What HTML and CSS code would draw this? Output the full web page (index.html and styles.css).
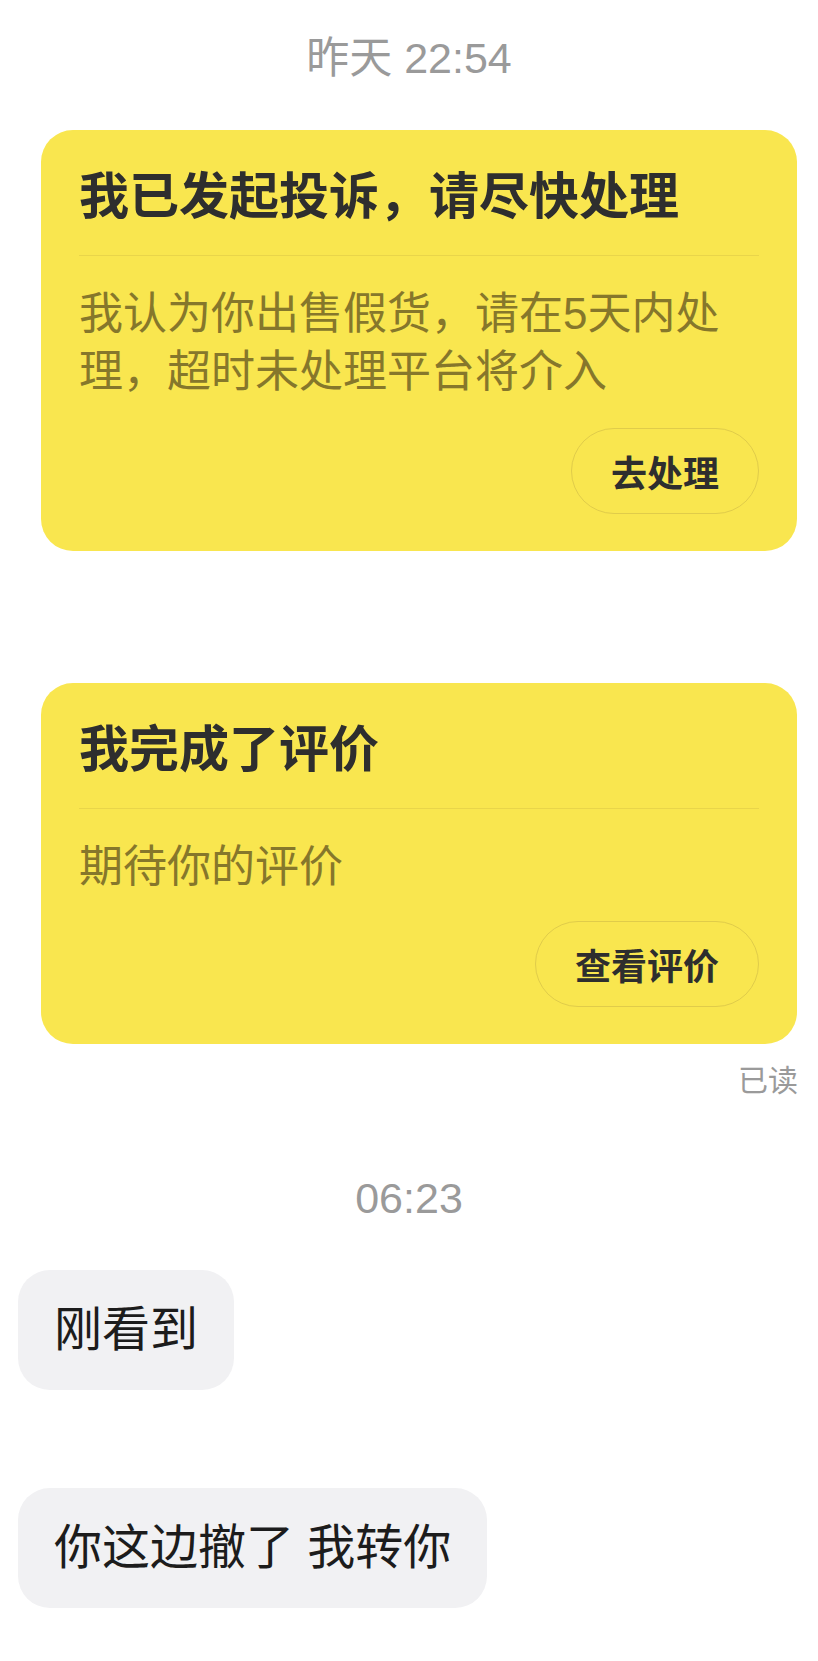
FILE: index.html
```html
<!DOCTYPE html>
<html lang="zh-CN">
<head>
<meta charset="utf-8">
<title>聊天</title>
<link rel="stylesheet" href="styles.css">
</head>
<body>
<div class="chat">
  <div class="time time-first">昨天 22:54</div>

  <div class="card card-first">
    <div class="card-title">我已发起投诉，请尽快处理</div>
    <div class="card-divider"></div>
    <div class="card-body">我认为你出售假货，请在5天内处<br>理，超时未处理平台将介入</div>
    <div class="card-actions"><span class="card-btn">去处理</span></div>
  </div>

  <div class="card card-second">
    <div class="card-title">我完成了评价</div>
    <div class="card-divider"></div>
    <div class="card-body">期待你的评价</div>
    <div class="card-actions"><span class="card-btn">查看评价</span></div>
  </div>

  <div class="read">已读</div>

  <div class="time time-second">06:23</div>

  <div class="bubble bubble-first">刚看到</div>
  <div class="bubble bubble-second">你这边撤了 我转你</div>
</div>
</body>
</html>
```

FILE: styles.css
```css
html, body {
  margin: 0;
  padding: 0;
  background: #ffffff;
}

body {
  font-family: "Liberation Sans", "Noto Sans CJK SC", sans-serif;
}

.chat {
  display: flex;
  flex-direction: column;
  width: 818px;
  padding-top: 33px;
  padding-bottom: 40px;
}

.time {
  align-self: center;
  font-size: 43px;
  line-height: 50px;
  color: #9a9a9a;
}

.time-second {
  margin-top: 74px;
}

.card {
  margin-left: 41px;
  width: 756px;
  box-sizing: border-box;
  background: #f9e64f;
  border-radius: 32px;
  padding: 35px 38px 37px 38px;
  display: flex;
  flex-direction: column;
}

.card-first {
  margin-top: 47px;
}

.card-second {
  margin-top: 132px;
}

.card-title {
  font-size: 50px;
  line-height: 64px;
  font-weight: 700;
  color: #2e2e2e;
}

.card-divider {
  height: 1px;
  background: #e9d54a;
  margin-top: 26px;
}

.card-body {
  margin-top: 29px;
  font-size: 44px;
  line-height: 58px;
  color: #86772b;
}

.card-actions {
  display: flex;
  justify-content: flex-end;
  margin-top: 27px;
}

.card-second .card-actions {
  margin-top: 25px;
}

.card-btn {
  box-sizing: border-box;
  height: 86px;
  padding: 0 39px;
  border: 1.5px solid #e0cc4a;
  border-radius: 43px;
  display: flex;
  align-items: center;
  font-size: 36px;
  font-weight: 700;
  color: #2e2e2e;
}

.read {
  align-self: flex-end;
  margin-right: 20px;
  margin-top: 19px;
  font-size: 30px;
  line-height: 36px;
  color: #9a9a9a;
}

.bubble {
  align-self: flex-start;
  margin-left: 18px;
  padding: 36px;
  border-radius: 32px;
  background: #f1f1f3;
  font-size: 48px;
  line-height: 48px;
  color: #1c1c1c;
}

.bubble-first {
  margin-top: 47px;
}

.bubble-second {
  margin-top: 98px;
}
```
